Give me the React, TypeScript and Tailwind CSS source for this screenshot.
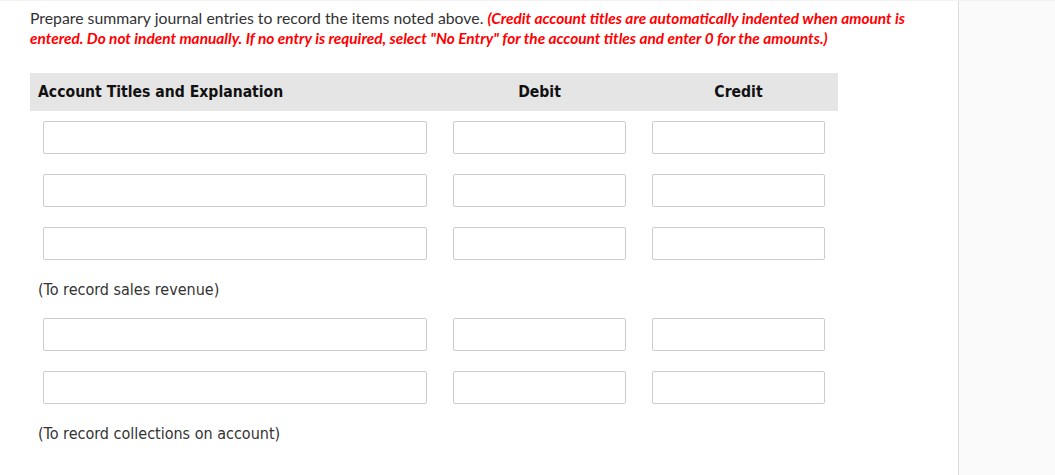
import React from "react";

const Input = ({ w }: { w: string }) => (
  <input
    type="text"
    className={`${w} h-[33px] rounded-[2px] border border-[#cccccc] bg-white outline-none`}
  />
);

const EntryRow = () => (
  <div className="flex h-[53px] items-center">
    <div className="flex w-[410px] justify-center">
      <Input w="w-[384px]" />
    </div>
    <div className="flex w-[199px] justify-center">
      <Input w="w-[173px]" />
    </div>
    <div className="flex w-[199px] justify-center">
      <Input w="w-[173px]" />
    </div>
  </div>
);

const Explanation = ({ text }: { text: string }) => (
  <div className="flex h-[38px] items-center pl-[8px] pt-[1px] text-[16px] text-[#333] font-['DejaVu_Sans_Condensed',sans-serif]">
    {text}
  </div>
);

export default function App() {
  return (
    <div className="flex h-[475px] w-[1055px] border-t border-[#f2f2f2] bg-white">
      <div className="w-[958px] pl-[30px] pt-[7px]">
        <p className="w-[900px] text-[15.8px] leading-[20px] text-[#333] font-['Lato',sans-serif]">
          Prepare summary journal entries to record the items noted above.{" "}
          <span className="text-[15.4px] font-bold italic text-[#ff0000]">
            (Credit account titles are automatically indented when amount is
            entered. Do not indent manually. If no entry is required, select
            "No Entry" for the account titles and enter 0 for the amounts.)
          </span>
        </p>
        <div className="mt-[25px] w-[808px] font-['DejaVu_Sans_Condensed',sans-serif]">
          <div className="flex h-[38px] items-center bg-[#e5e5e5] pt-[1px] text-[15.6px] font-bold text-[#111]">
            <div className="w-[410px] pl-[8px]">Account Titles and Explanation</div>
            <div className="w-[199px] text-center">Debit</div>
            <div className="w-[199px] text-center">Credit</div>
          </div>
          <EntryRow />
          <EntryRow />
          <EntryRow />
          <Explanation text="(To record sales revenue)" />
          <EntryRow />
          <EntryRow />
          <Explanation text="(To record collections on account)" />
        </div>
      </div>
      <div className="flex-1 border-l border-[#dddddd] bg-[#fafafa]" />
    </div>
  );
}
